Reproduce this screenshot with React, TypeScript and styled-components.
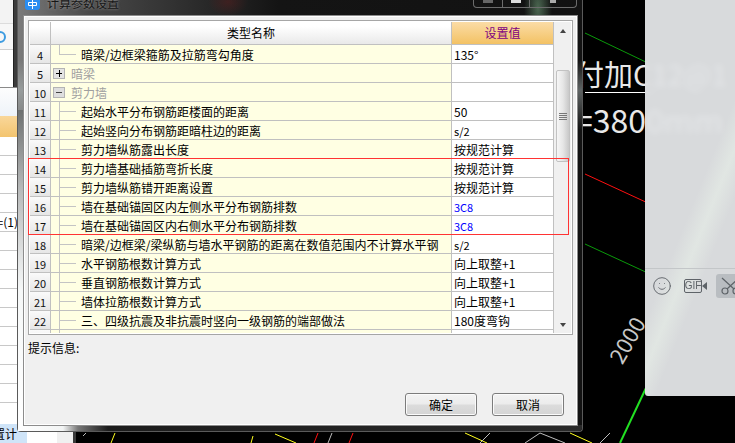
import React from 'react';
import styled, { createGlobalStyle } from 'styled-components';
import { Smile } from 'lucide-react';

const GlobalStyle = createGlobalStyle`
  html, body {
    margin: 0;
    padding: 0;
    background: #000;
  }
  body {
    font-family: "Noto Sans CJK SC", "Liberation Sans", sans-serif;
    font-size: 12px;
    color: #000;
  }
`;

const Desktop = styled.div`
  position: relative;
  width: 735px;
  height: 443px;
  overflow: hidden;
  background: #000;
`;

/* cad drawing behind the windows */
const CadLines = styled.svg`
  position: absolute;
  left: 0;
  top: 0;
`;

const CadLabel = styled.span<{ $x: number; $y: number; $size: number; $rotate?: number; $dim?: boolean }>`
  position: absolute;
  left: ${(p) => p.$x}px;
  top: ${(p) => p.$y}px;
  font-family: "Noto Sans CJK SC", "Liberation Sans", sans-serif;
  font-size: ${(p) => p.$size}px;
  line-height: 1;
  color: ${(p) => (p.$dim ? '#c8c8c8' : '#e8e8e8')};
  white-space: nowrap;
  transform: rotate(${(p) => p.$rotate ?? 0}deg);
  transform-origin: left bottom;
`;

const CadRule = styled.div`
  position: absolute;
  left: 585px;
  top: 92px;
  width: 70px;
  height: 1px;
  background: #fff;
`;

/* spreadsheet window peeking out on the left */
const SideWindow = styled.div`
  position: absolute;
  left: 0;
  top: 0;
  width: 76px;
  height: 443px;
  display: flex;
  flex-direction: column;
  background: #fff;
  border-right: 3px solid #3a3a3a;
  box-sizing: border-box;
`;

const SideTopGroup = styled.div`
  height: 87px;
  flex: none;
  background: #3c3c3c;
`;

const SideTopInner = styled.div`
  width: 13px;
  height: 87px;
  display: flex;
  flex-direction: column;
  border-right: 1px solid #222;
`;

const SideTop = styled.div`
  height: 24px;
  background: #f3f3f3;
  border-bottom: 1px solid #dcdcdc;
  box-sizing: border-box;
`;

const SideSearch = styled.div`
  height: 26px;
  display: flex;
  align-items: center;
  background: #f7f7f7;
  border-bottom: 1px solid #cfcfcf;
  box-sizing: border-box;
`;

const SearchRing = styled.span`
  width: 12px;
  height: 12px;
  margin-left: -6px;
  border: 2px solid #3d9be0;
  border-radius: 50%;
  box-sizing: border-box;
`;

const SidePlain = styled.div`
  height: 37px;
  background: #fff;
  box-sizing: border-box;
`;

const SideFade = styled.div`
  height: 29px;
  border-top: 1px solid #8a8a8a;
  box-sizing: border-box;
  background: linear-gradient(180deg, #fdfdfd, #eef3f9);
`;

const SideHeader = styled.div`
  height: 21px;
  background: linear-gradient(180deg, #f9d79a, #f3c46e);
`;

const SideRow = styled.div`
  height: 19px;
  flex: none;
  display: flex;
  justify-content: flex-end;
  align-items: center;
  width: 18px;
  border-bottom: 1px solid #c8c8c8;
  box-sizing: border-box;
  white-space: nowrap;
  font-size: 12px;
  line-height: 1;
`;

const SideBottom = styled.div`
  margin-top: auto;
  height: 19px;
  display: flex;
`;

const SideTab = styled.div`
  width: 27px;
  display: flex;
  justify-content: flex-end;
  align-items: center;
  padding-right: 10px;
  box-sizing: border-box;
  background: #cfe4f8;
  white-space: nowrap;
  font-size: 12px;
`;

const SideBlank = styled.div`
  width: 30px;
  background: #fff;
`;

const SideGray = styled.div`
  flex: 1;
  background: #f0f0f0;
`;

/* dialog */
const Dialog = styled.div`
  position: absolute;
  left: 17px;
  top: 0;
  width: 566px;
  height: 432px;
  box-sizing: border-box;
  display: flex;
  flex-direction: column;
  padding: 0 5px 6px 6px;
  border: 1px solid #5a5a5a;
  border-top: 0;
  border-radius: 0 0 4px 4px;
  background:
    radial-gradient(14px 40px at 520px 8px, rgba(120, 170, 130, 0.55), transparent),
    radial-gradient(20px 14px at 210px 2px, rgba(90, 30, 30, 0.5), transparent),
    linear-gradient(180deg, rgba(0, 0, 0, 0) 60px, rgba(190, 200, 200, 0.45) 90px, rgba(30, 30, 30, 0) 130px),
    linear-gradient(90deg, #7b7b7b 0, #4a4a4a 70px, #141414 260px, #121212 100%);
`;

const LeftGlow = styled.div`
  position: absolute;
  left: 0;
  top: 110px;
  bottom: 0;
  width: 6px;
  background: linear-gradient(180deg, #6d7070 0, #b8baba 80px, #f6f8f8 180px, #ffffff 100%);
`;

const BottomGlow = styled.div`
  position: absolute;
  left: 0;
  right: 0;
  bottom: 0;
  height: 6px;
  border-radius: 0 0 4px 4px;
  background: linear-gradient(90deg, #fff 0, #f2f4f4 45px, #777 60px, #1c1c1c 90px, #2a2a2a 100%);
`;

const TitleBar = styled.div`
  position: relative;
  height: 16px;
  flex: none;
  display: flex;
  align-items: flex-start;
  overflow: hidden;
`;

const TitleIcon = styled.div`
  width: 15px;
  height: 10px;
  margin-left: 1px;
  border-radius: 0 0 3px 3px;
  background: #2a8df0;
  display: flex;
  justify-content: center;
`;

const TitleText = styled.div`
  margin-left: 7px;
  margin-top: -6px;
  font-size: 12px;
  line-height: 18px;
  color: #161616;
  text-shadow: 0 0 3px rgba(210, 210, 210, 0.6);
`;

const WindowButtons = styled.div`
  margin-left: auto;
  height: 7px;
  display: flex;
  border: 1px solid #6c6c6c;
  border-top: 0;
  border-radius: 0 0 4px 4px;
`;

const WindowButton = styled.div<{ $w: number }>`
  width: ${(p) => p.$w}px;
  display: flex;
  justify-content: center;
  border-right: 1px solid #6c6c6c;
  &:last-child {
    border-right: 0;
  }
`;

const WindowGlyph = styled.span<{ $color: string; $w: number }>`
  width: ${(p) => p.$w}px;
  height: 3px;
  background: ${(p) => p.$color};
`;

const Body = styled.div`
  position: relative;
  flex: 1;
  display: flex;
  flex-direction: column;
  padding: 3px 3px 0 3px;
  background: #f0f0f0;
  border: 1px solid #fff;
  outline: 1px solid #8c8c8c;
  box-sizing: border-box;
`;

const GridFrame = styled.div`
  position: relative;
  height: 315px;
  flex: none;
  display: flex;
  border: 1px solid #a6a6a6;
  box-sizing: border-box;
  padding: 1px;
  background: #fff;
`;

const Table = styled.div`
  width: 524px;
  height: 311px;
  overflow: hidden;
`;

const Row = styled.div`
  display: grid;
  grid-template-columns: 21px 401px 102px;
  height: 19px;
`;

const HeadRow = styled(Row)`
  height: 23px;
`;

const Cell = styled.div`
  display: flex;
  align-items: center;
  box-sizing: border-box;
  border-right: 1px solid #c0c0c0;
  border-bottom: 1px solid #c0c0c0;
  white-space: nowrap;
  overflow: hidden;
  line-height: 18px;
`;

const HeadCell = styled(Cell)<{ $accent?: boolean }>`
  justify-content: center;
  font-size: 12px;
  color: ${(p) => (p.$accent ? '#800080' : '#000')};
  background: ${(p) =>
    p.$accent
      ? 'linear-gradient(180deg, #fbdca6, #f3c264)'
      : 'linear-gradient(180deg, #ffffff 20%, #e9e9e9)'};
`;

const NumCell = styled(Cell)`
  justify-content: center;
  padding-top: 1px;
  font-size: 11px;
  background: linear-gradient(180deg, #fafafa, #e6e6e6);
  color: #111;
`;

const NameCell = styled(Cell)`
  padding-top: 1px;
  background: #ffffe3;
`;

const ValueCell = styled(Cell)<{ $blue?: boolean; $small?: boolean }>`
  padding: 1px 0 0 2px;
  background: #fff;
  color: ${(p) => (p.$blue ? '#0000ff' : '#000')};
  font-size: ${(p) => (p.$small ? 11 : 12)}px;
`;

const Branch = styled.span<{ $last?: boolean }>`
  position: relative;
  flex: none;
  align-self: stretch;
  width: 30px;
  margin-top: -1px;

  &::before {
    content: '';
    position: absolute;
    left: 8px;
    top: 0;
    width: 1px;
    height: ${(p) => (p.$last ? 10 : 19)}px;
    background: #c4c4c4;
  }
  &::after {
    content: '';
    position: absolute;
    left: 8px;
    top: 9px;
    width: 17px;
    height: 1px;
    background: #c4c4c4;
  }
`;

const Toggle = styled.span<{ $open?: boolean }>`
  position: relative;
  flex: none;
  width: 12px;
  height: 11px;
  margin: 0 6px 0 2px;
  box-sizing: border-box;
  border: 1px solid #b4b4b4;
  background: ${(p) => (p.$open ? '#dedede' : '#e4e4e4')};

  &::before {
    content: '';
    position: absolute;
    left: 2px;
    right: 2px;
    top: 4px;
    height: 1px;
    background: ${(p) => (p.$open ? '#444' : '#000')};
  }
  &::after {
    content: '';
    display: ${(p) => (p.$open ? 'none' : 'block')};
    position: absolute;
    left: 5px;
    top: 1px;
    width: 1px;
    height: 7px;
    background: #000;
  }
`;

const GroupName = styled.span`
  color: #a0a0a0;
`;

const Scrollbar = styled.div`
  flex: 1;
  display: flex;
  flex-direction: column;
  align-items: center;
  background: #f0f0f0;
`;

const Arrow = styled.span<{ $down?: boolean }>`
  flex: none;
  width: 0;
  height: 0;
  margin: ${(p) => (p.$down ? '0 0 6px' : '7px 0 0')};
  border-left: 3.5px solid transparent;
  border-right: 3.5px solid transparent;
  ${(p) => (p.$down ? 'border-top: 4px solid #444;' : 'border-bottom: 4px solid #444;')}
`;

const Thumb = styled.div`
  width: 14px;
  height: 92px;
  margin-top: 37px;
  margin-bottom: auto;
  display: flex;
  flex-direction: column;
  justify-content: center;
  align-items: center;
  gap: 1px;
  border: 1px solid #c2c2c2;
  border-radius: 2px;
  box-sizing: border-box;
  background: linear-gradient(90deg, #f6f6f6, #e6e6e6 50%, #c8c8c8);
`;

const Grip = styled.span`
  width: 8px;
  height: 1px;
  background: #777;
`;

const RedMark = styled.div`
  position: absolute;
  left: -1px;
  top: 137px;
  width: 541px;
  height: 77px;
  box-sizing: border-box;
  border: 1px solid #ff3333;
`;

const Hint = styled.div`
  margin-top: 4px;
  font-size: 12px;
  line-height: 18px;
`;

const Footer = styled.div`
  margin-top: auto;
  margin-bottom: 8px;
  padding-right: 9px;
  display: flex;
  justify-content: flex-end;
  gap: 15px;
`;

const DialogButton = styled.button`
  width: 72px;
  height: 23px;
  padding: 0;
  border: 1px solid #7c7c7c;
  border-radius: 3px;
  font-family: inherit;
  font-size: 12px;
  color: #000;
  background: linear-gradient(180deg, #f3f3f3 0, #ececec 48%, #dcdcdc 52%, #d4d4d4 100%);
  box-shadow: inset 0 0 0 1px #fbfbfb;
`;

/* chat panel on the right */
const ChatPanel = styled.div`
  position: absolute;
  left: 645px;
  top: 0;
  width: 90px;
  height: 396px;
  display: flex;
  flex-direction: column;
  overflow: hidden;
  border-radius: 0 0 0 3px;
  background:
    linear-gradient(112deg, rgba(255, 255, 255, 0) 52%, rgba(232, 240, 232, 0.55) 60%, rgba(255, 255, 255, 0) 68%),
    rgba(228, 230, 232, 0.95);
  backdrop-filter: blur(3px);
`;

const ChatHistory = styled.div`
  height: 269px;
  flex: none;
  box-sizing: border-box;
  border-bottom: 1px solid #c3c6c8;
`;

const ChatTools = styled.div`
  display: flex;
  align-items: center;
  gap: 9px;
  padding: 5px 0 0 7px;
  color: #5e6368;

  & > * {
    flex: none;
  }
`;

const GifBadge = styled.div`
  display: flex;
  align-items: center;
  margin-left: 3px;
`;

const GifLabel = styled.span`
  width: 18px;
  height: 14px;
  display: flex;
  align-items: center;
  justify-content: center;
  box-sizing: border-box;
  border: 1px solid #5e6368;
  border-radius: 2px;
  font-family: "Liberation Sans", sans-serif;
  font-size: 10px;
  line-height: 1;
  color: #5e6368;
`;

const GifLens = styled.span`
  width: 0;
  height: 0;
  border-top: 4px solid transparent;
  border-bottom: 4px solid transparent;
  border-right: 5px solid #5e6368;
`;

const ScissorBox = styled.div`
  width: 24px;
  height: 24px;
  display: flex;
  align-items: center;
  padding-left: 5px;
  border-radius: 3px 0 0 3px;
  background: #b9bdc1;
`;

type RowData = {
  no: string;
  name: string;
  value?: string;
  kind?: 'leaf' | 'last' | 'closed' | 'open';
  blue?: boolean;
  small?: boolean;
};

const rows: RowData[] = [
  { no: '4', name: '暗梁/边框梁箍筋及拉筋弯勾角度', value: '135°', kind: 'last' },
  { no: '5', name: '暗梁', kind: 'closed' },
  { no: '10', name: '剪力墙', kind: 'open' },
  { no: '11', name: '起始水平分布钢筋距楼面的距离', value: '50' },
  { no: '12', name: '起始竖向分布钢筋距暗柱边的距离', value: 's/2', small: true },
  { no: '13', name: '剪力墙纵筋露出长度', value: '按规范计算' },
  { no: '14', name: '剪力墙基础插筋弯折长度', value: '按规范计算' },
  { no: '15', name: '剪力墙纵筋错开距离设置', value: '按规范计算' },
  { no: '16', name: '墙在基础锚固区内左侧水平分布钢筋排数', value: '3C8', blue: true, small: true },
  { no: '17', name: '墙在基础锚固区内右侧水平分布钢筋排数', value: '3C8', blue: true, small: true },
  { no: '18', name: '暗梁/边框梁/梁纵筋与墙水平钢筋的距离在数值范围内不计算水平钢', value: 's/2', small: true },
  { no: '19', name: '水平钢筋根数计算方式', value: '向上取整+1' },
  { no: '20', name: '垂直钢筋根数计算方式', value: '向上取整+1' },
  { no: '21', name: '墙体拉筋根数计算方式', value: '向上取整+1' },
  { no: '22', name: '三、四级抗震及非抗震时竖向一级钢筋的端部做法', value: '180度弯钩' },
  { no: '', name: '', value: '按规范计算' },
];

const App = () => {
  return (
    <Desktop>
      <GlobalStyle />

      <CadLines width="735" height="443" viewBox="0 0 735 443">
        <g fill="none" strokeWidth="1">
          <line x1="585" y1="33" x2="650" y2="64" stroke="#0a9a0a" />
          <line x1="585" y1="174" x2="650" y2="204" stroke="#ff1010" />
          <line x1="585" y1="244" x2="650" y2="274" stroke="#0a9a0a" />
          <line x1="620" y1="443" x2="646" y2="388" stroke="#22e022" strokeWidth="2" />
          <line x1="115" y1="433" x2="111" y2="443" stroke="#ffff20" />
          <line x1="253" y1="436" x2="251" y2="443" stroke="#ffff20" />
          <line x1="275" y1="434" x2="296" y2="443" stroke="#ffff20" />
          <line x1="318" y1="433" x2="314" y2="443" stroke="#ff1010" />
          <line x1="332" y1="433" x2="328" y2="443" stroke="#bdbdbd" />
          <line x1="353" y1="433" x2="349" y2="443" stroke="#ff1010" />
          <line x1="465" y1="433" x2="487" y2="443" stroke="#ffff20" />
          <line x1="490" y1="433" x2="480" y2="443" stroke="#bdbdbd" />
          <line x1="540" y1="433" x2="525" y2="443" stroke="#bdbdbd" />
          <line x1="540" y1="433" x2="565" y2="443" stroke="#bdbdbd" />
          <line x1="570" y1="433" x2="592" y2="443" stroke="#ffff20" />
          <line x1="610" y1="433" x2="600" y2="443" stroke="#bdbdbd" />
          <line x1="86" y1="433" x2="83" y2="436" stroke="#bdbdbd" />
        </g>
      </CadLines>
      <CadLabel $x={575} $y={59} $size={29}>付加C12@1</CadLabel>
      <CadRule />
      <CadLabel $x={575} $y={103} $size={32}>=3800mm</CadLabel>
      <CadLabel $x={623} $y={344} $size={22} $rotate={-60} $dim>2000</CadLabel>

      <SideWindow>
        <SideTopGroup>
          <SideTopInner>
            <SideTop />
            <SideSearch>
              <SearchRing />
            </SideSearch>
            <SidePlain />
          </SideTopInner>
        </SideTopGroup>
        <SideFade />
        <SideHeader />
        {Array.from({ length: 4 }).map((_, i) => (
          <SideRow key={`a${i}`} />
        ))}
        <SideRow>=(1)</SideRow>
        {Array.from({ length: 9 }).map((_, i) => (
          <SideRow key={`b${i}`} />
        ))}
        <SideBottom>
          <SideTab>设置计</SideTab>
          <SideBlank />
          <SideGray />
        </SideBottom>
      </SideWindow>

      <Dialog>
        <LeftGlow />
        <BottomGlow />
        <TitleBar>
          <TitleIcon>
            <svg width="11" height="10" viewBox="0 0 11 10" fill="none" stroke="#fff" strokeWidth="1">
              <path d="M1.5 2.5h8v3h-8zM5.5 0v9" />
            </svg>
          </TitleIcon>
          <TitleText>计算参数设置</TitleText>
          <WindowButtons>
            <WindowButton $w={28}>
              <WindowGlyph $color="#666" $w={10} />
            </WindowButton>
            <WindowButton $w={26}>
              <WindowGlyph $color="#ddd" $w={10} />
            </WindowButton>
            <WindowButton $w={46}>
              <WindowGlyph $color="#aaa" $w={6} />
            </WindowButton>
          </WindowButtons>
        </TitleBar>
        <Body>
          <GridFrame>
            <Table>
              <HeadRow>
                <HeadCell />
                <HeadCell>类型名称</HeadCell>
                <HeadCell $accent>设置值</HeadCell>
              </HeadRow>
              {rows.map((r, i) => (
                <Row key={i}>
                  <NumCell>{r.no}</NumCell>
                  <NameCell>
                    {r.kind === 'closed' && <Toggle />}
                    {r.kind === 'open' && <Toggle $open />}
                    {r.kind === 'closed' || r.kind === 'open' ? (
                      <GroupName>{r.name}</GroupName>
                    ) : (
                      <>
                        <Branch $last={r.kind === 'last'} />
                        {r.name}
                      </>
                    )}
                  </NameCell>
                  <ValueCell $blue={r.blue} $small={r.small}>{r.value}</ValueCell>
                </Row>
              ))}
            </Table>
            <Scrollbar>
              <Arrow />
              <Thumb>
                <Grip />
                <Grip />
                <Grip />
                <Grip />
              </Thumb>
              <Arrow $down />
            </Scrollbar>
            <RedMark />
          </GridFrame>
          <Hint>提示信息:</Hint>
          <Footer>
            <DialogButton>确定</DialogButton>
            <DialogButton>取消</DialogButton>
          </Footer>
        </Body>
      </Dialog>

      <ChatPanel>
        <ChatHistory />
        <ChatTools>
          <Smile size={20} strokeWidth={1.1} />
          <GifBadge>
            <GifLabel>GIF</GifLabel>
            <GifLens />
          </GifBadge>
          <ScissorBox>
            <svg width="20" height="18" viewBox="0 0 20 18" fill="none" stroke="#5e6368" strokeWidth="1.2">
              <circle cx="4" cy="14" r="3" />
              <circle cx="15" cy="14" r="3" />
              <path d="M1 1l12 11M18 1L6 12" />
            </svg>
          </ScissorBox>
        </ChatTools>
      </ChatPanel>
    </Desktop>
  );
};

export default App;
